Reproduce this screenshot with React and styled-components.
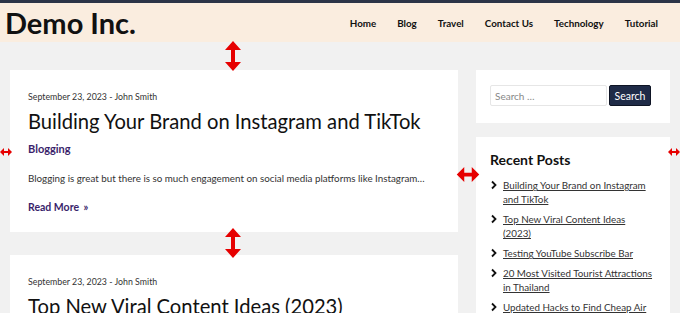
import React from "react";
import styled, { createGlobalStyle } from "styled-components";

// page-wide reset and font
const GlobalStyle = createGlobalStyle`
  body {
    margin: 0;
    background: #f1f1f1;
    font-family: Lato, "Open Sans", sans-serif;
    color: #222;
  }
`;

// each recent post title, split where the widget wraps it
const posts = [
  ["Building Your Brand on Instagram", "and TikTok"],
  ["Top New Viral Content Ideas", "(2023)"],
  ["Testing YouTube Subscribe Bar"],
  ["20 Most Visited Tourist Attractions", "in Thailand"],
  ["Updated Hacks to Find Cheap Air", "Tickets"],
];

const navItems = ["Home", "Blog", "Travel", "Contact Us", "Technology", "Tutorial"];

// red annotation arrows that sit over the layout
function VArrow({ top, left }) {
  return (
    <ArrowBox style={{ top, left }}>
      <svg width="18" height="30" viewBox="0 0 18 30">
        <path d="M9 0 L17 9 L11 9 L11 21 L17 21 L9 30 L1 21 L7 21 L7 9 L1 9 Z" fill="#e60000" />
      </svg>
    </ArrowBox>
  );
}

function HArrow({ top, left, w, h }) {
  return (
    <ArrowBox style={{ top, left }}>
      <svg width={w} height={h} viewBox="0 0 24 16">
        <path d="M0 8 L8 0 L8 6 L16 6 L16 0 L24 8 L16 16 L16 10 L8 10 L8 16 Z" fill="#e60000" />
      </svg>
    </ArrowBox>
  );
}

function App() {
  return (
    <Page>
      <GlobalStyle />
      <Header>
        <Logo>Demo Inc.</Logo>
        <Nav>
          {navItems.map((n) => (
            <NavLink key={n}>{n}</NavLink>
          ))}
        </Nav>
      </Header>

      <Content>
        <Main>
          <Card>
            <Meta>September 23, 2023 - John Smith</Meta>
            <Title>Building Your Brand on Instagram and TikTok</Title>
            <Category>Blogging</Category>
            <Excerpt>
              Blogging is great but there is so much engagement on social media platforms like Instagram…
            </Excerpt>
            <ReadMore>
              Read More <span>»</span>
            </ReadMore>
          </Card>
          <Card>
            <Meta>September 23, 2023 - John Smith</Meta>
            <Title>Top New Viral Content Ideas (2023)</Title>
          </Card>
        </Main>

        <Sidebar>
          <Widget $pad="15px 14px 17px">
            <SearchRow>
              <SearchInput placeholder="Search …" />
              <SearchButton>Search</SearchButton>
            </SearchRow>
          </Widget>
          <Widget $pad="14px 14px 20px">
            <WidgetTitle>Recent Posts</WidgetTitle>
            <PostList>
              {posts.map((lines) => (
                <PostItem key={lines[0]}>
                  <Chevron viewBox="0 0 8 10">
                    <path d="M2 1.5 L5.5 5 L2 8.5" fill="none" stroke="#111" strokeWidth="1.8" />
                  </Chevron>
                  <PostLink>
                    {lines.map((l, i) => (
                      <React.Fragment key={l}>
                        {i > 0 && <br />}
                        {l}
                      </React.Fragment>
                    ))}
                  </PostLink>
                </PostItem>
              ))}
            </PostList>
          </Widget>
        </Sidebar>
      </Content>

      <VArrow top={41} left={224} />
      <VArrow top={228} left={224} />
      <HArrow top={148} left={0} w={12} h={8} />
      <HArrow top={167} left={456} w={24} h={15} />
      <HArrow top={148} left={668} w={12} h={8} />
    </Page>
  );
}

const Page = styled.div`
  position: relative;
  height: 313px;
  overflow: hidden;
`;

const ArrowBox = styled.div`
  position: absolute;
  line-height: 0;
`;

const Header = styled.header`
  height: 39px;
  border-top: 3px solid #2b3447;
  background: #faeddf;
  display: flex;
  align-items: center;
  justify-content: space-between;
  padding: 0 22px 0 5px;
`;

const Logo = styled.div`
  font-size: 29px;
  font-weight: 700;
  color: #111;
`;

const Nav = styled.nav`
  display: flex;
  gap: 21px;
`;

const NavLink = styled.a`
  font-size: 9.8px;
  font-weight: 700;
  color: #111;
`;

const Content = styled.div`
  display: grid;
  grid-template-columns: 448px 194px;
  gap: 18px;
  padding: 28px 10px 0;
`;

const Main = styled.main`
  display: flex;
  flex-direction: column;
  gap: 23px;
`;

const Card = styled.article`
  background: #fff;
  padding: 20px 18px 18px;
  min-height: 124px;
`;

const Meta = styled.div`
  font-size: 8.8px;
  color: #333;
  line-height: 14px;
`;

const Title = styled.h2`
  margin: 3px 0 0;
  font-size: 20.2px;
  font-weight: 400;
  line-height: 28px;
  color: #111;
`;

const Category = styled.div`
  margin-top: 7px;
  font-size: 11px;
  line-height: 14px;
  font-weight: 700;
  color: #3a1f6b;
`;

const Excerpt = styled.p`
  margin: 16px 0 0;
  font-size: 9.8px;
  line-height: 13px;
  color: #333;
`;

const ReadMore = styled.div`
  margin-top: 15px;
  font-size: 10.5px;
  line-height: 14px;
  font-weight: 700;
  color: #3a1f6b;
  span {
    margin-left: 2px;
  }
`;

const Sidebar = styled.aside`
  display: flex;
  flex-direction: column;
  gap: 14px;
`;

const Widget = styled.section`
  background: #fff;
  padding: ${(p) => p.$pad};
`;

const SearchRow = styled.div`
  display: flex;
  gap: 2px;
`;

const SearchInput = styled.input`
  width: 117px;
  height: 21px;
  box-sizing: border-box;
  border: 1px solid #e6e6e6;
  border-radius: 2px;
  padding: 0 4px;
  font-family: Lato, sans-serif;
  font-size: 10px;
  &::placeholder {
    color: #888;
  }
`;

const SearchButton = styled.button`
  height: 21px;
  width: 42px;
  box-sizing: border-box;
  background: #1f2b47;
  color: #fff;
  border: 1px solid #0e1424;
  border-radius: 2px;
  font-family: Lato, sans-serif;
  font-size: 10.5px;
  padding: 0;
`;

const WidgetTitle = styled.h3`
  margin: 0 0 10px;
  font-size: 14px;
  font-weight: 700;
  color: #111;
`;

const PostList = styled.ul`
  list-style: none;
  margin: 0;
  padding: 0;
  display: flex;
  flex-direction: column;
  gap: 6px;
`;

const PostItem = styled.li`
  display: flex;
  gap: 5px;
  align-items: flex-start;
`;

const Chevron = styled.svg`
  width: 8px;
  height: 10px;
  flex: none;
  margin-top: 2px;
`;

const PostLink = styled.a`
  font-size: 9.8px;
  line-height: 14px;
  color: #333;
  text-decoration: underline;
  white-space: nowrap;
`;

export default App;
